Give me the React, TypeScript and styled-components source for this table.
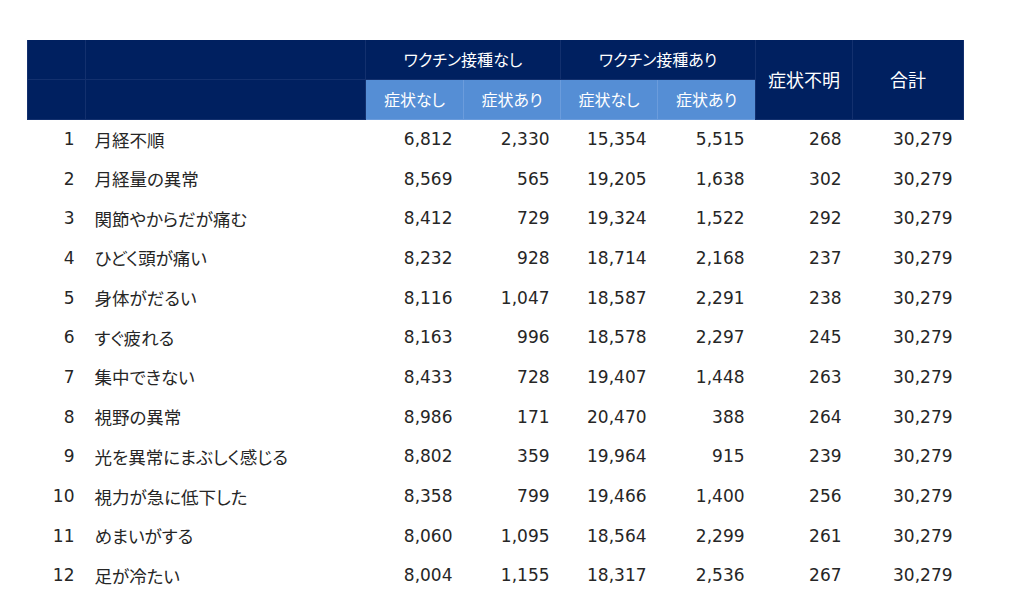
import React from "react";
import styled, { createGlobalStyle } from "styled-components";

const GlobalStyle = createGlobalStyle`
  html, body { margin: 0; padding: 0; background: #ffffff; }
  body { font-family: "DejaVu Sans", "Noto Sans CJK JP", sans-serif; }
`;

const Page = styled.div`
  width: 1035px;
  height: 601px;
  padding: 40px 0 0 27px;
  box-sizing: border-box;
  overflow: hidden;
`;

const Table = styled.table`
  border-collapse: collapse;
  table-layout: fixed;
  width: 936px;
  font-feature-settings: "palt";
`;

const HeadCell = styled.th<{ $light?: boolean; $h: number; $size?: number }>`
  height: ${(p) => p.$h}px;
  padding: 0;
  box-sizing: border-box;
  background: ${(p) => (p.$light ? "#558ed5" : "#002060")};
  color: #ffffff;
  font-family: "Noto Sans CJK JP", sans-serif;
  font-weight: 400;
  font-size: ${(p) => p.$size ?? 16}px;
  text-align: center;
  vertical-align: middle;
  border: 1px solid ${(p) => (p.$light ? "#6b9cdc" : "#13306e")};
  border-top: none;
  white-space: nowrap;
`;

const Row = styled.tr`
  height: 39.7px;
`;

const Cell = styled.td<{ $align: "left" | "right"; $cjk?: boolean }>`
  padding: ${(p) => (p.$align === "left" ? "0 0 0 9px" : "0 11px 0 0")};
  text-align: ${(p) => p.$align};
  vertical-align: middle;
  color: #262626;
  font-size: ${(p) => (p.$cjk ? 17.5 : 17)}px;
  font-family: ${(p) =>
    p.$cjk ? `"Noto Sans CJK JP", sans-serif` : `"DejaVu Sans", "Noto Sans CJK JP", sans-serif`};
  white-space: nowrap;
`;

const rows: [string, number[]][] = [
  ["月経不順", [6812, 2330, 15354, 5515, 268, 30279]],
  ["月経量の異常", [8569, 565, 19205, 1638, 302, 30279]],
  ["関節やからだが痛む", [8412, 729, 19324, 1522, 292, 30279]],
  ["ひどく頭が痛い", [8232, 928, 18714, 2168, 237, 30279]],
  ["身体がだるい", [8116, 1047, 18587, 2291, 238, 30279]],
  ["すぐ疲れる", [8163, 996, 18578, 2297, 245, 30279]],
  ["集中できない", [8433, 728, 19407, 1448, 263, 30279]],
  ["視野の異常", [8986, 171, 20470, 388, 264, 30279]],
  ["光を異常にまぶしく感じる", [8802, 359, 19964, 915, 239, 30279]],
  ["視力が急に低下した", [8358, 799, 19466, 1400, 256, 30279]],
  ["めまいがする", [8060, 1095, 18564, 2299, 261, 30279]],
  ["足が冷たい", [8004, 1155, 18317, 2536, 267, 30279]],
];

const widths = [58, 280, 98, 97, 97, 98, 97, 111];

const fmt = (n: number) => n.toLocaleString("en-US");

export default function App() {
  return (
    <>
      <GlobalStyle />
      <Page>
        <Table>
          <colgroup>
            {widths.map((w, i) => (
              <col key={i} style={{ width: w }} />
            ))}
          </colgroup>
          <thead>
            <tr>
              <HeadCell $h={39} />
              <HeadCell $h={39} />
              <HeadCell $h={39} colSpan={2} $size={16}>
                ワクチン接種なし
              </HeadCell>
              <HeadCell $h={39} colSpan={2} $size={16}>
                ワクチン接種あり
              </HeadCell>
              <HeadCell $h={79} rowSpan={2} $size={18}>
                症状不明
              </HeadCell>
              <HeadCell $h={79} rowSpan={2} $size={18}>
                合計
              </HeadCell>
            </tr>
            <tr>
              <HeadCell $h={40} />
              <HeadCell $h={40} />
              <HeadCell $h={40} $light>症状なし</HeadCell>
              <HeadCell $h={40} $light>症状あり</HeadCell>
              <HeadCell $h={40} $light>症状なし</HeadCell>
              <HeadCell $h={40} $light>症状あり</HeadCell>
            </tr>
          </thead>
          <tbody>
            {rows.map(([name, vals], i) => (
              <Row key={i}>
                <Cell $align="right">{i + 1}</Cell>
                <Cell $align="left" $cjk>
                  {name}
                </Cell>
                {vals.map((v, j) => (
                  <Cell key={j} $align="right">
                    {fmt(v)}
                  </Cell>
                ))}
              </Row>
            ))}
          </tbody>
        </Table>
      </Page>
    </>
  );
}
